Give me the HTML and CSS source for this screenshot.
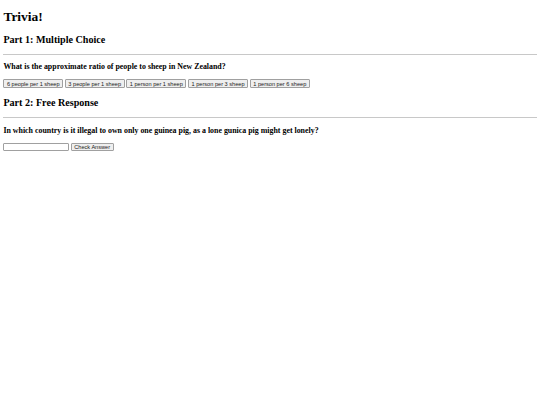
FILE: index.html
```html
<!DOCTYPE html>
<html lang="en">
<head>
  <meta charset="UTF-8" />
  <title>Trivia!</title>
  <link rel="stylesheet" href="styles.css">
</head>
<body>
  <h1>Trivia!</h1>

  <div class="section">
    <h2>Part 1: Multiple Choice</h2>
    <hr>
    <h3>What is the approximate ratio of people to sheep in New Zealand?</h3>
    <div class="choices">
      <button>6 people per 1 sheep</button>
      <button>3 people per 1 sheep</button>
      <button>1 person per 1 sheep</button>
      <button>1 person per 3 sheep</button>
      <button>1 person per 6 sheep</button>
    </div>
  </div>

  <div class="section">
    <h2>Part 2: Free Response</h2>
    <hr>
    <h3>In which country is it illegal to own only one guinea pig, as a lone gunica pig might get lonely?</h3>
    <form class="answer">
      <input type="text" class="answer-input">
      <button type="button">Check Answer</button>
    </form>
  </div>
</body>
</html>
```

FILE: styles.css
```css
html, body {
  background: #fff;
}

body {
  margin: 0 3.375px 3.375px;
  font-family: "Liberation Serif", "Times New Roman", serif;
  font-size: 6.75px;
  line-height: 7.75px;
  color: #000;
}

h1 {
  font-size: 13.5px;
  line-height: 15.5px;
  margin: 9.05px 0;
}

h2 {
  font-size: 10.125px;
  line-height: 11.6px;
  margin: 8.4px 0;
}

h3 {
  font-size: 7.9px;
  line-height: 9.1px;
  margin: 7.9px 0;
}

hr {
  margin: 3.375px 0;
  border: none;
  border-top: 1px solid #c8c8c8;
}

.choices,
.answer {
  display: flex;
  align-items: stretch;
  gap: 1.7px;
  margin: 0;
}

button {
  font-family: "Liberation Sans", Arial, sans-serif;
  font-size: 5.625px;
  line-height: 6px;
  color: #222;
  background: #efefef;
  border: 0.84px solid #a0a0a0;
  border-radius: 1px;
  padding: 0.42px 2.53px;
  margin: 0;
}

.answer-input {
  font-family: "Liberation Sans", Arial, sans-serif;
  font-size: 5.625px;
  line-height: 6.5px;
  width: 62px;
  padding: 0.42px 0.84px;
  border: 0.84px solid #a0a0a0;
  border-radius: 1px;
  margin: 0;
}
```
